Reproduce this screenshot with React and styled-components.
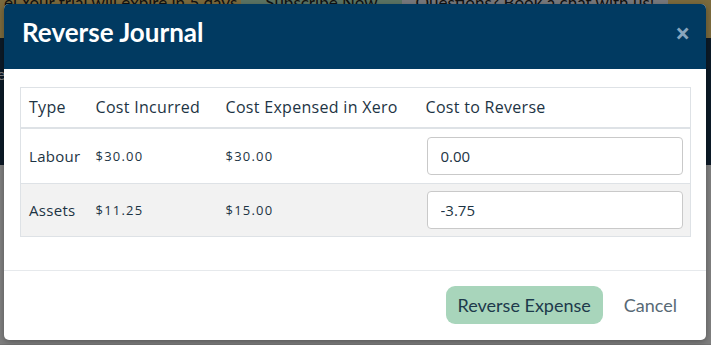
import React from 'react';
import styled, { createGlobalStyle } from 'styled-components';

const GlobalStyle = createGlobalStyle`
    html, body {
        margin: 0;
        padding: 0;
        height: 100%;
        overflow: hidden;
        font-family: Lato, "Open Sans", Arial, sans-serif;
    }
`;

// Page behind the modal
const Page = styled.div`
    position: relative;
    width: 711px;
    height: 345px;
    background: #fefefe;
    overflow: hidden;
`;

const Banner = styled.div`
    display: flex;
    align-items: flex-start;
    height: 38px;
    background: #f6d47a;
    font-size: 17px;
    color: #222;
    white-space: nowrap;
    overflow: hidden;
`;

const BannerItem = styled.span`
    display: block;
    padding: 0 ${(p) => p.pad || 12}px;
    height: 100%;
    line-height: 14px;
    margin-top: -4px;
    background: ${(p) => p.bg || 'transparent'};
`;

const Nav = styled.div`
    height: 127px;
    background: #18344e;
    color: #fff;
    font-size: 16px;
    padding: 26px 0 0 0;
    box-sizing: border-box;
`;

const Content = styled.div`
    height: 180px;
    border-top: 87px solid transparent;
    box-sizing: border-box;
    border-bottom: 1px solid #e8e8e8;
`;

const Overlay = styled.div`
    position: absolute;
    inset: 0;
    background: rgba(0, 0, 0, 0.5);
`;

// Modal
const Modal = styled.div`
    position: absolute;
    top: 4px;
    left: 4px;
    width: 702px;
    height: 336px;
    background: #fff;
    border-radius: 5px;
    overflow: hidden;
    display: flex;
    flex-direction: column;
    box-shadow: 0 2px 6px rgba(0, 0, 0, 0.3);
`;

const Header = styled.div`
    height: 65px;
    background: #013a61;
    display: flex;
    align-items: flex-start;
    justify-content: space-between;
    padding: 12px 16px 0 18px;
    box-sizing: border-box;
`;

const Title = styled.h2`
    margin: 0;
    font-size: 26px;
    line-height: 32px;
    font-weight: 700;
    color: #fff;
`;

const Close = styled.button`
    border: none;
    background: none;
    padding: 0;
    margin-top: 4px;
    color: #88a5bd;
    font-size: 26px;
    font-weight: 700;
    line-height: 1;
    font-family: "Open Sans", Arial, sans-serif;
    cursor: pointer;
`;

const Body = styled.div`
    padding: 18px 16px 33px 16px;
    border-bottom: 1px solid #e6e9ec;
`;

const Table = styled.table`
    width: 670px;
    border-collapse: collapse;
    border: 1px solid #dee2e6;
    color: #1d3444;
    table-layout: fixed;
    font-family: "Open Sans", Arial, sans-serif;
`;

const Th = styled.th`
    text-align: left;
    font-weight: 400;
    font-size: 16px;
    letter-spacing: 0.3px;
    height: 40px;
    padding: 0 8px;
    border-bottom: 2px solid #dee2e6;
    width: ${(p) => p.w}px;
    box-sizing: border-box;
    white-space: nowrap;
`;

const Tr = styled.tr`
    background: ${(p) => (p.striped ? '#f2f2f2' : '#fff')};
    border-top: 1px solid #dee2e6;
`;

const Td = styled.td`
    padding: 0 8px;
    height: ${(p) => p.h}px;
    font-size: ${(p) => (p.small ? 13 : 15)}px;
    letter-spacing: ${(p) => (p.small ? '1.2px' : '0.3px')};
    white-space: nowrap;
`;

const Input = styled.input`
    display: block;
    width: 256px;
    height: 38px;
    box-sizing: border-box;
    border: 1px solid #c9c9c9;
    border-radius: 4px;
    padding: 0 13px;
    margin-left: 1px;
    font-family: "Open Sans", Arial, sans-serif;
    font-size: 15px;
    color: #1d3444;
    background: #fff;
`;

const Footer = styled.div`
    flex: 1;
    display: flex;
    align-items: center;
    justify-content: flex-end;
    padding: 0 22px 0 0;
    gap: 8px;
`;

const PrimaryButton = styled.button`
    height: 38px;
    padding: 0 12px;
    border: none;
    border-radius: 9px;
    background: #a8d5bb;
    color: #1d3a4b;
    font-family: Lato, "Open Sans", Arial, sans-serif;
    font-size: 18px;
    cursor: pointer;
    margin-top: -1px;
`;

const LinkButton = styled.button`
    height: 38px;
    padding: 0 7px 0 13px;
    border: none;
    background: none;
    color: #586975;
    font-family: Lato, "Open Sans", Arial, sans-serif;
    font-size: 18px;
    cursor: pointer;
`;

const rows = [
  { type: 'Labour', incurred: '$30.00', expensed: '$30.00', reverse: '0.00', h: 54 },
  { type: 'Assets', incurred: '$11.25', expensed: '$15.00', reverse: '-3.75', h: 52 },
];

export default function App() {
  return (
    <>
      <GlobalStyle />
      <Page>
        <Banner>
          <BannerItem pad={4}>el Your trial will expire in 5 days</BannerItem>
          <BannerItem bg="#b6e6c6" pad={24}>Subscribe Now</BannerItem>
          <BannerItem bg="#eef1f8" pad={14}>Questions? Book a chat with us!</BannerItem>
        </Banner>
        <Nav>
          <span style={{ marginLeft: -3 }}>e</span>
        </Nav>
        <Content />
        <Overlay />
        <Modal>
          <Header>
            <Title>Reverse Journal</Title>
            <Close aria-label="Close">×</Close>
          </Header>
          <Body>
            <Table>
              <thead>
                <tr>
                  <Th w={67}>Type</Th>
                  <Th w={130}>Cost Incurred</Th>
                  <Th w={200}>Cost Expensed in Xero</Th>
                  <Th w={273}>Cost to Reverse</Th>
                </tr>
              </thead>
              <tbody>
                {rows.map((r, i) => (
                  <Tr key={r.type} striped={i % 2 === 1}>
                    <Td h={r.h}>{r.type}</Td>
                    <Td h={r.h} small>{r.incurred}</Td>
                    <Td h={r.h} small>{r.expensed}</Td>
                    <Td h={r.h}>
                      <Input defaultValue={r.reverse} />
                    </Td>
                  </Tr>
                ))}
              </tbody>
            </Table>
          </Body>
          <Footer>
            <PrimaryButton>Reverse Expense</PrimaryButton>
            <LinkButton>Cancel</LinkButton>
          </Footer>
        </Modal>
      </Page>
    </>
  );
}
